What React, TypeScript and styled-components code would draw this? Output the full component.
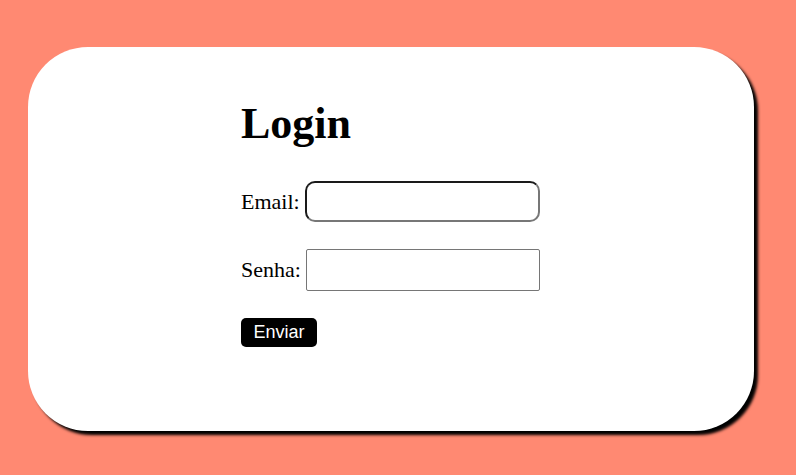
import React from "react";
import styled, { createGlobalStyle } from "styled-components";

const GlobalStyle = createGlobalStyle`
  html, body {
    margin: 0;
    padding: 0;
    background: #ff8972;
  }
  body {
    font-family: "Liberation Serif", "Times New Roman", serif;
    font-size: 22px;
    color: #000;
  }
`;

const Page = styled.div`
  min-height: 475px;
  box-sizing: border-box;
  padding: 47px 42px 0 28px;
`;

const Card = styled.div`
  height: 384px;
  background: #fff;
  border-radius: 60px;
  box-shadow: 4px 4px 3px #000;
  display: flex;
  justify-content: center;
`;

const Form = styled.form`
  width: 300px;
  display: flex;
  flex-direction: column;
  align-items: flex-start;
  padding-top: 51px;
`;

const Title = styled.h1`
  margin: 0 0 32px;
  font-size: 44px;
  font-weight: bold;
  line-height: normal;
`;

const Row = styled.div`
  display: flex;
  align-items: center;
  gap: 5px;
  margin-bottom: 27px;
`;

const Label = styled.label`
  font-size: 22px;
`;

const Input = styled.input<{ $rounded?: boolean }>`
  box-sizing: border-box;
  width: ${(p) => (p.$rounded ? "235px" : "234px")};
  height: ${(p) => (p.$rounded ? "41px" : "42px")};
  font-size: 18px;
  font-family: "Liberation Sans", Arial, sans-serif;
  background: #fff;
  padding: 4px 8px;
  outline: none;
  border-radius: ${(p) => (p.$rounded ? "10px" : "2px")};
  border-style: solid;
  border-width: ${(p) => (p.$rounded ? "2px" : "1px")};
  border-color: ${(p) =>
    p.$rounded ? "#1a1a1a #777 #777 #1a1a1a" : "#767676"};
`;

const Button = styled.button`
  box-sizing: border-box;
  width: 76px;
  height: 29px;
  background: #000;
  color: #fff;
  border: none;
  border-radius: 5px;
  font-family: "Liberation Sans", Arial, sans-serif;
  font-size: 18px;
  padding: 0;
  cursor: pointer;
`;

export default function App() {
  return (
    <>
      <GlobalStyle />
      <Page>
        <Card>
          <Form onSubmit={(e) => e.preventDefault()}>
            <Title>Login</Title>
            <Row>
              <Label htmlFor="email">Email:</Label>
              <Input id="email" type="email" $rounded />
            </Row>
            <Row>
              <Label htmlFor="senha">Senha:</Label>
              <Input id="senha" type="password" />
            </Row>
            <Button type="submit">Enviar</Button>
          </Form>
        </Card>
      </Page>
    </>
  );
}
